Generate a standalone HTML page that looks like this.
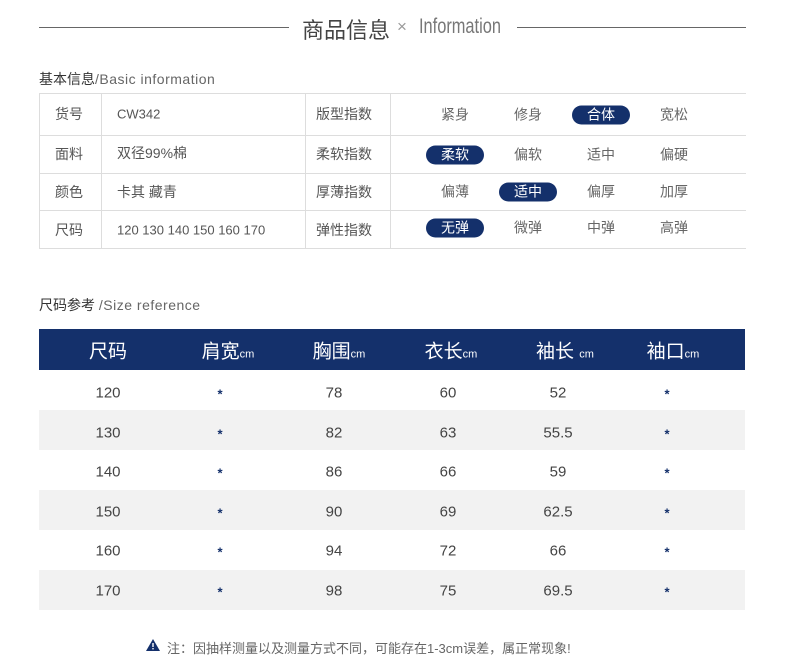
<!DOCTYPE html>
<html><head><meta charset="utf-8"><style>
*{margin:0;padding:0;box-sizing:border-box}
body{width:790px;height:669px;background:#fff;font-family:"Liberation Sans","Noto Sans CJK SC",sans-serif;color:#555;position:relative;overflow:hidden}
.a{position:absolute;white-space:nowrap}
.line{position:absolute;height:1px;background:#666;top:27px}
.t{position:absolute;left:39px;top:93px;width:707px;height:156px;border:1px solid #ddd;border-right:none}
.h{position:absolute;height:1px;background:#ddd;left:39px;width:707px}
.v{position:absolute;width:1px;background:#ddd;top:93px;height:156px}
.c{position:absolute;font-size:14px;color:#555;transform:translateY(-50%)}
.o{position:absolute;width:58px;text-align:center;font-size:14px;color:#666;transform:translate(-50%,-50%);line-height:19px;border-radius:10px}
.o.on{background:#14306b;color:#fff}
.hd{position:absolute;left:39px;top:329px;width:706px;height:41px;background:#14306b}
.r{position:absolute;left:39px;width:706px;height:40px}
.g{background:#f2f2f2}
.cc{position:absolute;transform:translate(-50%,-50%);font-size:15px;color:#444}
.st{font-size:13px;font-weight:bold;color:#14306b}
.hh{position:absolute;transform:translate(-50%,-50%);font-size:19px;color:#fff}
.hh small{font-size:11px}
</style></head><body>
<div class="line" style="left:39px;width:250px"></div>
<div class="line" style="left:517px;width:229px"></div>
<div class="a" style="left:302px;top:13px;font-size:22px;color:#444">商品信息</div>
<div class="a" style="left:397px;top:17px;font-size:17px;color:#999">×</div>
<div class="a" style="left:419px;top:15px;font-size:21px;color:#777;transform:scaleX(0.78);transform-origin:left top">Information</div>
<div class="a" style="left:39px;top:69px;font-size:14px;color:#333">基本信息<span style="color:#666;letter-spacing:0.5px">/Basic information</span></div>
<div class="t"></div>
<div class="h" style="top:135px"></div><div class="h" style="top:173px"></div><div class="h" style="top:210px"></div>
<div class="v" style="left:101px"></div><div class="v" style="left:305px"></div><div class="v" style="left:390px"></div>
<div class="c" style="left:55px;top:114px">货号</div><div class="c" style="left:117px;top:114px;font-size:13px">CW342</div><div class="c" style="left:316px;top:114px">版型指数</div>
<div class="c" style="left:55px;top:154px">面料</div><div class="c" style="left:117px;top:153px">双径99%棉</div><div class="c" style="left:316px;top:154px">柔软指数</div>
<div class="c" style="left:55px;top:192px">颜色</div><div class="c" style="left:117px;top:192px">卡其 藏青</div><div class="c" style="left:316px;top:192px">厚薄指数</div>
<div class="c" style="left:55px;top:230px">尺码</div><div class="c" style="left:117px;top:230px;font-size:13px">120 130 140 150 160 170</div><div class="c" style="left:316px;top:230px">弹性指数</div>
<div class="o" style="left:455px;top:115px">紧身</div><div class="o" style="left:528px;top:115px">修身</div><div class="o on" style="left:601px;top:115px">合体</div><div class="o" style="left:674px;top:115px">宽松</div>
<div class="o on" style="left:455px;top:155px">柔软</div><div class="o" style="left:528px;top:155px">偏软</div><div class="o" style="left:601px;top:155px">适中</div><div class="o" style="left:674px;top:155px">偏硬</div>
<div class="o" style="left:455px;top:192px">偏薄</div><div class="o on" style="left:528px;top:192px">适中</div><div class="o" style="left:601px;top:192px">偏厚</div><div class="o" style="left:674px;top:192px">加厚</div>
<div class="o on" style="left:455px;top:228px">无弹</div><div class="o" style="left:528px;top:228px">微弹</div><div class="o" style="left:601px;top:228px">中弹</div><div class="o" style="left:674px;top:228px">高弹</div>
<div class="a" style="left:39px;top:295px;font-size:14px;color:#333">尺码参考 <span style="color:#666;letter-spacing:0.5px">/Size reference</span></div>
<div class="hd"></div>
<div class="hh" style="left:108px;top:350px">尺码</div>
<div class="hh" style="left:228px;top:350px">肩宽<small>cm</small></div>
<div class="hh" style="left:339px;top:350px">胸围<small>cm</small></div>
<div class="hh" style="left:451px;top:350px">衣长<small>cm</small></div>
<div class="hh" style="left:565px;top:350px">袖长 <small>cm</small></div>
<div class="hh" style="left:673px;top:350px">袖口<small>cm</small></div>
<div class="r" style="top:370px"></div><div class="r g" style="top:410px"></div><div class="r" style="top:450px"></div><div class="r g" style="top:490px"></div><div class="r" style="top:530px"></div><div class="r g" style="top:570px"></div>
<div class="cc" style="left:108px;top:393px">120</div><div class="cc st" style="left:220px;top:394px">*</div><div class="cc" style="left:334px;top:393px">78</div><div class="cc" style="left:448px;top:393px">60</div><div class="cc" style="left:558px;top:393px">52</div><div class="cc st" style="left:667px;top:394px">*</div>
<div class="cc" style="left:108px;top:433px">130</div><div class="cc st" style="left:220px;top:434px">*</div><div class="cc" style="left:334px;top:433px">82</div><div class="cc" style="left:448px;top:433px">63</div><div class="cc" style="left:558px;top:433px">55.5</div><div class="cc st" style="left:667px;top:434px">*</div>
<div class="cc" style="left:108px;top:472px">140</div><div class="cc st" style="left:220px;top:473px">*</div><div class="cc" style="left:334px;top:472px">86</div><div class="cc" style="left:448px;top:472px">66</div><div class="cc" style="left:558px;top:472px">59</div><div class="cc st" style="left:667px;top:473px">*</div>
<div class="cc" style="left:108px;top:512px">150</div><div class="cc st" style="left:220px;top:513px">*</div><div class="cc" style="left:334px;top:512px">90</div><div class="cc" style="left:448px;top:512px">69</div><div class="cc" style="left:558px;top:512px">62.5</div><div class="cc st" style="left:667px;top:513px">*</div>
<div class="cc" style="left:108px;top:551px">160</div><div class="cc st" style="left:220px;top:552px">*</div><div class="cc" style="left:334px;top:551px">94</div><div class="cc" style="left:448px;top:551px">72</div><div class="cc" style="left:558px;top:551px">66</div><div class="cc st" style="left:667px;top:552px">*</div>
<div class="cc" style="left:108px;top:591px">170</div><div class="cc st" style="left:220px;top:592px">*</div><div class="cc" style="left:334px;top:591px">98</div><div class="cc" style="left:448px;top:591px">75</div><div class="cc" style="left:558px;top:591px">69.5</div><div class="cc st" style="left:667px;top:592px">*</div>
<svg class="a" style="left:146px;top:639px" width="14" height="12"><path d="M7 0L14 12H0Z" fill="#14306b"/><rect x="6.3" y="4" width="1.4" height="4" fill="#fff"/><rect x="6.3" y="9" width="1.4" height="1.4" fill="#fff"/></svg>
<div class="a" style="left:167px;top:638px;font-size:13px;color:#666">注：因抽样测量以及测量方式不同，可能存在1-3cm误差，属正常现象!</div>
</body></html>
